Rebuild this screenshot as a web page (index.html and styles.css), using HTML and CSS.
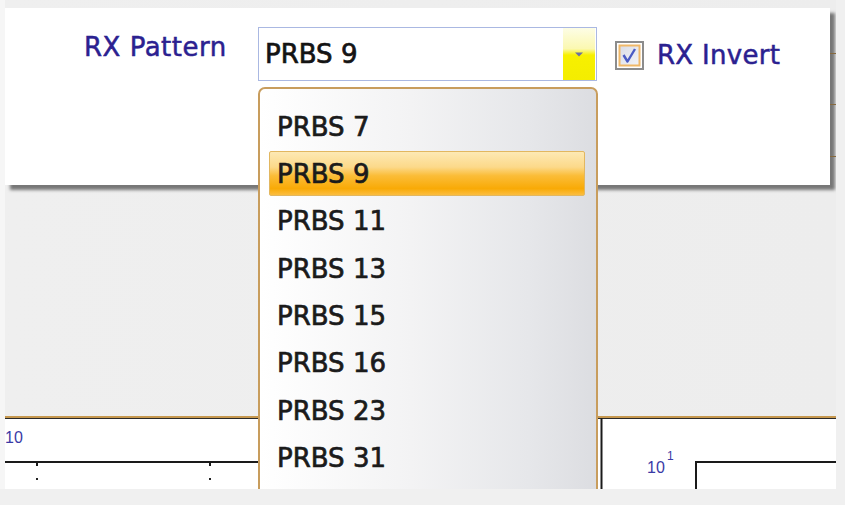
FILE: index.html
```html
<!DOCTYPE html>
<html>
<head>
<meta charset="utf-8">
<link rel="stylesheet" href="styles.css">
</head>
<body>
<div class="screen">
  <div class="viewport">
    <section class="panel">
      <div class="form-row">
        <span class="field-label">RX Pattern</span>
        <div class="combo">
          <span class="combo-value">PRBS 9</span>
          <span class="combo-btn">
            <svg width="10" height="5" viewBox="0 0 10 5"><path d="M1 0.5 L9 0.5 L5 4.5 Z" fill="#6b6fa3"/></svg>
          </span>
        </div>
        <div class="check">
          <svg class="check-box" width="29" height="29" viewBox="0 0 29 29">
            <defs>
              <linearGradient id="cbg" x1="0" y1="0" x2="1" y2="1">
                <stop offset="0" stop-color="#d9dce6"/>
                <stop offset="1" stop-color="#f3f4f8"/>
              </linearGradient>
            </defs>
            <rect x="1" y="1" width="27" height="27" fill="#fff" stroke="#8c8c8c" stroke-width="2"/>
            <rect x="4.5" y="4.5" width="20" height="20" fill="url(#cbg)" stroke="#f0b868" stroke-width="2"/>
            <path d="M8.5 14 L12.5 20.5 L20 8" fill="none" stroke="#4a5bc4" stroke-width="2.4" stroke-linejoin="round"/>
          </svg>
          <span class="check-label">RX Invert</span>
        </div>
      </div>
      <span class="rail-tick t1"></span>
      <span class="rail-tick t2"></span>
      <span class="rail-tick t3"></span>
    </section>
    <div class="gap"></div>
    <section class="charts">
      <div class="chart chart-left">
        <svg width="592" height="71" viewBox="0 0 592 71">
          <text x="0" y="25" class="axis-text">10</text>
          <line x1="0" y1="44" x2="592" y2="44" stroke="#1a1a1a" stroke-width="2"/>
          <line x1="32" y1="44" x2="32" y2="48" stroke="#1a1a1a" stroke-width="2"/>
          <line x1="205" y1="44" x2="205" y2="48" stroke="#1a1a1a" stroke-width="2"/>
          <rect x="31" y="60" width="2" height="2" fill="#222"/>
          <rect x="204" y="60" width="2" height="2" fill="#222"/>
        </svg>
      </div>
      <div class="chart chart-right">
        <svg width="239" height="71" viewBox="0 0 239 71">
          <line x1="4.5" y1="0" x2="4.5" y2="71" stroke="#1a1a1a" stroke-width="2"/>
          <text x="50" y="55" class="axis-text">10</text>
          <text x="70" y="42" class="axis-sup">1</text>
          <line x1="98" y1="44" x2="239" y2="44" stroke="#1a1a1a" stroke-width="2"/>
          <line x1="99" y1="43" x2="99" y2="71" stroke="#1a1a1a" stroke-width="2"/>
        </svg>
      </div>
    </section>
    <ul class="dropdown">
      <li class="opt">PRBS 7</li>
      <li class="opt selected">PRBS 9</li>
      <li class="opt">PRBS 11</li>
      <li class="opt">PRBS 13</li>
      <li class="opt">PRBS 15</li>
      <li class="opt">PRBS 16</li>
      <li class="opt">PRBS 23</li>
      <li class="opt">PRBS 31</li>
    </ul>
  </div>
</div>
</body>
</html>
```

FILE: styles.css
```css
html, body {
  margin: 0;
  padding: 0;
}
body {
  background: #f0f0f0;
  font-family: "DejaVu Sans", "Liberation Sans", sans-serif;
}
.screen {
  width: 845px;
  height: 505px;
  background: #f0f0f0;
  overflow: hidden;
}
.viewport {
  width: 836px;
  height: 489px;
  position: relative;
  overflow: hidden;
  display: flex;
  flex-direction: column;
  background: linear-gradient(to right, #f6f6f6 0, #f6f6f6 5px, #efefef 5px, #ededed 100%);
}
.panel {
  position: relative;
  margin: 8px 6px 0 5px;
  height: 177px;
  flex: none;
  background: #ffffff;
  box-shadow: 5px 5px 3px #777777;
}
.form-row {
  display: flex;
  align-items: flex-start;
  padding: 19px 0 0 79px;
}
.field-label {
  width: 174px;
  margin-top: 5px;
  font-size: 26px;
  line-height: 30px;
  letter-spacing: 0.5px;
  color: #2b2190;
  -webkit-text-stroke: 0.5px #2b2190;
  white-space: nowrap;
}
.combo {
  width: 339px;
  height: 54px;
  box-sizing: border-box;
  border: 1px solid #aab8e2;
  background: #ffffff;
  display: flex;
  align-items: center;
}
.combo-value {
  flex: 1;
  padding-left: 6px;
  font-size: 26px;
  line-height: 30px;
  color: #141414;
  -webkit-text-stroke: 0.7px #141414;
}
.combo-btn {
  width: 32px;
  align-self: stretch;
  margin-right: 1px;
  display: flex;
  align-items: center;
  justify-content: center;
  background: linear-gradient(#fdfde6 0%, #fbf8b0 40%, #f7f000 52%, #f4ed00 100%);
}
.check {
  display: flex;
  align-items: center;
  margin: 13px 0 0 18px;
}
.check-box {
  display: block;
}
.check-label {
  margin-left: 13px;
  font-size: 26px;
  line-height: 30px;
  letter-spacing: 0.3px;
  color: #2b2190;
  -webkit-text-stroke: 0.5px #2b2190;
  white-space: nowrap;
}
.rail-tick {
  position: absolute;
  right: -6px;
  width: 6px;
  height: 1px;
  background: #86693e;
}
.t1 { top: 45px; }
.t2 { top: 96px; }
.t3 { top: 148px; }
.gap {
  flex: 1;
}
.charts {
  flex: none;
  height: 73px;
  box-sizing: border-box;
  margin-left: 5px;
  border-top: 2px solid #c6984f;
  box-shadow: inset 0 1px 0 #2a2a2a;
  background: #ffffff;
  display: flex;
}
.chart svg {
  display: block;
}
.chart-left {
  width: 592px;
  overflow: hidden;
}
.chart-right {
  flex: 1;
  overflow: hidden;
}
.axis-text {
  font-family: "Liberation Sans", sans-serif;
  font-size: 16px;
  fill: #3a3aa6;
}
.axis-sup {
  font-family: "Liberation Sans", sans-serif;
  font-size: 12px;
  fill: #3a3aa6;
}
.dropdown {
  position: absolute;
  left: 258px;
  top: 87px;
  width: 340px;
  height: 430px;
  box-sizing: border-box;
  margin: 0;
  padding: 15px 0 0 0;
  list-style: none;
  display: flex;
  flex-direction: column;
  gap: 2.4px;
  border: 2px solid #c89d5d;
  border-radius: 7px 7px 0 0;
  background: linear-gradient(to right, #ffffff 0%, #f3f3f4 45%, #e6e7ea 80%, #dcdde1 100%);
}
.opt {
  flex: none;
  height: 45px;
  margin: 0 11px 0 9px;
  padding-left: 7px;
  box-sizing: border-box;
  border: 1px solid transparent;
  border-radius: 2px;
  display: flex;
  align-items: center;
  font-size: 26px;
  line-height: 30px;
  color: #1b1b1b;
  -webkit-text-stroke: 0.7px #1b1b1b;
  white-space: nowrap;
}
.opt.selected {
  border-color: #e2b760;
  background: linear-gradient(#fde9b4 0%, #fcd98a 35%, #fbbd38 55%, #f9aa06 85%, #fbbd40 100%);
}
```
